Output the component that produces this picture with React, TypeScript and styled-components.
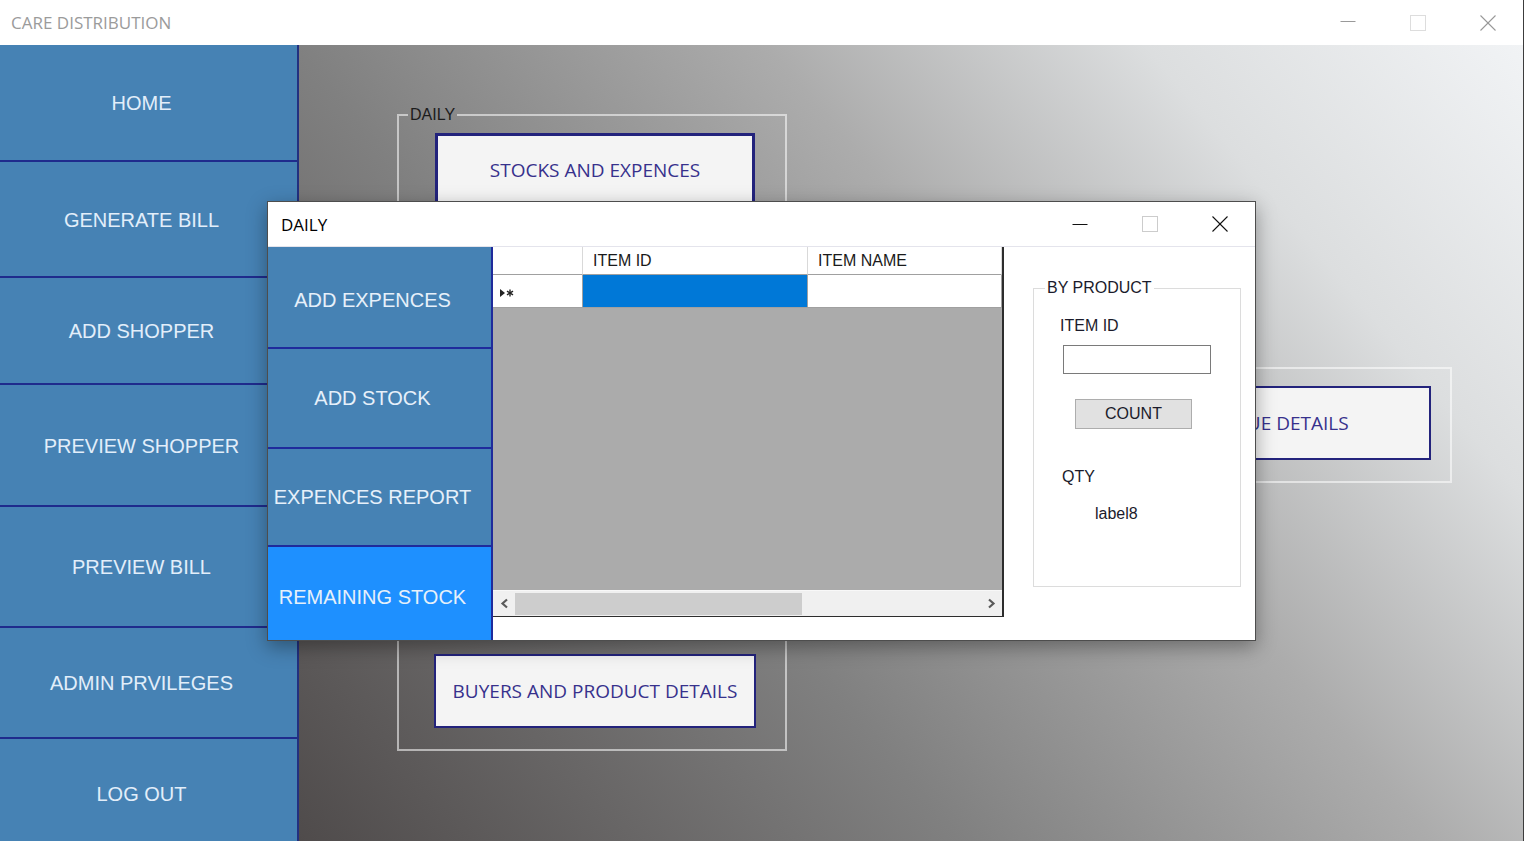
import React from 'react';
import styled, { createGlobalStyle } from 'styled-components';

const GlobalStyle = createGlobalStyle`
  html, body {
    margin: 0;
    padding: 0;
    background: #ffffff;
  }
  body {
    font-family: 'Liberation Sans', Arial, sans-serif;
  }
  * {
    box-sizing: border-box;
  }
`;

const Window = styled.div`
  position: relative;
  width: 1524px;
  height: 841px;
  border-right: 1px solid #3c3c3c;
  display: grid;
  grid-template-rows: 45px 1fr;
  overflow: hidden;
`;

const TitleBar = styled.div`
  display: flex;
  align-items: center;
  justify-content: space-between;
  background: #ffffff;
`;

const AppTitle = styled.div`
  padding-left: 11px;
  font-family: 'Open Sans', sans-serif;
  font-size: 17px;
  color: #9b9b9b;
`;

const Controls = styled.div`
  display: flex;
  align-self: stretch;
`;

const ControlButton = styled.div`
  width: 70px;
  display: flex;
  align-items: center;
  justify-content: center;
`;

const Body = styled.div`
  display: grid;
  grid-template-columns: 299px 1fr;
  min-height: 0;
`;

const Sidebar = styled.div`
  background: #4682b4;
  border-right: 2px solid #23307f;
  display: flex;
  flex-direction: column;
  overflow: hidden;
`;

const NavButton = styled.div<{ $height?: number }>`
  flex: ${p => (p.$height ? `0 0 ${p.$height}px` : '1')};
  border-bottom: ${p => (p.$height ? '2px solid #1f2b8c' : 'none')};
  display: flex;
  align-items: center;
  justify-content: center;
  padding: ${p => (p.$height ? '2px' : '8px')} 14px 0 0;
  color: #e2eefa;
  font-size: 20px;
`;

const Canvas = styled.div`
  background: linear-gradient(
    50deg,
    #4f4b4b 0%,
    #808080 35%,
    #acacac 60%,
    #dcdedf 80%,
    #f1f3f5 100%
  );
  display: grid;
  grid-template-columns: 390px 384px;
  grid-template-rows: 145px 108px 124px 144px 124px;
  column-gap: 281px;
  padding: 61px 0 0 98px;
  align-content: start;
`;

const GroupBox = styled.fieldset<{ $col: number; $row: number }>`
  grid-column: ${p => p.$col};
  grid-row: ${p => p.$row};
  margin: 0;
  padding: 0;
  min-width: 0;
  border: 2px solid rgba(255, 255, 255, 0.55);
`;

const GroupLegend = styled.legend`
  margin-left: 9px;
  padding: 0 2px;
  font-size: 16px;
  line-height: 18px;
  color: #1c1c1c;
`;

const BigButton = styled.div<{ $left: number; $width: number; $height: number; $focused?: boolean }>`
  margin: 9px 0 0 ${p => p.$left}px;
  width: ${p => p.$width}px;
  height: ${p => p.$height}px;
  background: #f4f4f4;
  border: ${p => (p.$focused ? 3 : 2)}px solid #23237c;
  display: flex;
  align-items: center;
  justify-content: center;
  font-family: 'Open Sans', sans-serif;
  font-size: 19px;
  color: #37318c;
`;

const Dialog = styled.div`
  position: absolute;
  left: 267px;
  top: 201px;
  width: 989px;
  height: 440px;
  border: 1px solid #4d4d4d;
  background: #ffffff;
  box-shadow: 0 6px 18px rgba(0, 0, 0, 0.35);
  display: grid;
  grid-template-rows: 45px 1fr;
`;

const DialogTitleBar = styled.div`
  display: flex;
  align-items: center;
  justify-content: space-between;
  padding-left: 13px;
  border-bottom: 1px solid #e4e4ec;
`;

const DialogTitle = styled.div`
  font-family: 'Open Sans', sans-serif;
  font-size: 17px;
  color: #000000;
`;

const DialogBody = styled.div`
  display: grid;
  grid-template-columns: 225px 511px 1fr;
  min-height: 0;
  overflow: hidden;
`;

const Menu = styled.div`
  background: #4682b4;
  border-right: 2px solid #1f2b9c;
  display: flex;
  flex-direction: column;
  overflow: hidden;
`;

const MenuItem = styled.div<{ $height: number; $active?: boolean; $shift?: number }>`
  flex: 0 0 ${p => p.$height}px;
  background: ${p => (p.$active ? '#1e90ff' : '#4682b4')};
  border-bottom: 2px solid #1f2b9c;
  display: flex;
  align-items: center;
  justify-content: center;
  padding: ${p => p.$shift || 0}px 14px 0 0;
  color: #e6f0fa;
  font-size: 20px;
  white-space: nowrap;
`;

const GridArea = styled.div`
  display: flex;
  flex-direction: column;
  background: #ffffff;
`;

const GridFrame = styled.div`
  height: 370px;
  border-right: 2px solid #2d2d2d;
  border-bottom: 1px solid #2d2d2d;
  background: #ababab;
  display: flex;
  flex-direction: column;
`;

const GridRow = styled.div<{ $height: number }>`
  display: grid;
  grid-template-columns: 90px 225px 1fr;
  height: ${p => p.$height}px;
  background: #ffffff;
`;

const HeaderCell = styled.div`
  border-right: 1px solid #d9d9d9;
  border-bottom: 1px solid #a0a0a0;
  display: flex;
  align-items: center;
  padding-left: 10px;
  font-size: 16px;
  color: #1a1a1a;
`;

const Cell = styled.div<{ $selected?: boolean }>`
  background: ${p => (p.$selected ? '#0078d7' : '#ffffff')};
  border-right: 1px solid #a0a0a0;
  border-bottom: 1px solid #a0a0a0;
  display: flex;
  align-items: center;
  padding: 3px 0 0 7px;
`;

const GridFill = styled.div`
  flex: 1;
`;

const ScrollBar = styled.div`
  height: 26px;
  background: #f0f0f0;
  border-top: 1px solid #f8f8f8;
  display: flex;
  align-items: center;
`;

const ScrollArrow = styled.div`
  width: 22px;
  display: flex;
  align-items: center;
  justify-content: center;
`;

const ScrollThumb = styled.div`
  width: 287px;
  height: 22px;
  background: #cdcdcd;
`;

const ScrollTrack = styled.div`
  flex: 1;
`;

const SidePanel = styled.div`
  padding: 32px 0 0 29px;
  background: #ffffff;
`;

const ProductGroup = styled.fieldset`
  margin: 0;
  padding: 0;
  width: 208px;
  height: 308px;
  border: 1px solid #dcdcdc;
  display: flex;
  flex-direction: column;
  align-items: flex-start;
`;

const ProductLegend = styled.legend`
  margin-left: 11px;
  padding: 0 2px;
  font-size: 16px;
  line-height: 18px;
  color: #1b1b2b;
`;

const FieldLabel = styled.div<{ $left: number; $top: number }>`
  margin: ${p => p.$top}px 0 0 ${p => p.$left}px;
  font-size: 16px;
  line-height: 18px;
  color: #1b1b2b;
`;

const TextBox = styled.div`
  margin: 10px 0 0 29px;
  width: 148px;
  height: 29px;
  border: 1px solid #7a7a7a;
  background: #ffffff;
`;

const CountButton = styled.div`
  margin: 25px 0 0 41px;
  width: 117px;
  height: 30px;
  background: #e1e1e1;
  border: 1px solid #adadad;
  display: flex;
  align-items: center;
  justify-content: center;
  font-size: 16px;
  color: #1b1b2b;
`;

const MinimizeIcon = ({ color, y = 8.5 }: { color: string; y?: number }) => (
  <svg width="16" height="16" viewBox="0 0 16 16">
    <line x1="0.5" y1={y} x2="15.5" y2={y} stroke={color} strokeWidth="1" />
  </svg>
);

const MaximizeIcon = ({ color }: { color: string }) => (
  <svg width="16" height="16" viewBox="0 0 16 16">
    <rect x="0.5" y="0.5" width="15" height="15" fill="none" stroke={color} strokeWidth="1" />
  </svg>
);

const CloseIcon = ({ color }: { color: string }) => (
  <svg width="16" height="16" viewBox="0 0 16 16">
    <line x1="0.5" y1="0.5" x2="15.5" y2="15.5" stroke={color} strokeWidth="1.1" />
    <line x1="15.5" y1="0.5" x2="0.5" y2="15.5" stroke={color} strokeWidth="1.1" />
  </svg>
);

const RowMarker = () => (
  <svg width="16" height="10" viewBox="0 0 16 10">
    <polygon points="0,1 5,5 0,9" fill="#222" />
    <g stroke="#222" strokeWidth="1.4">
      <line x1="10" y1="1.5" x2="10" y2="8.5" />
      <line x1="7" y1="3.2" x2="13" y2="6.8" />
      <line x1="13" y1="3.2" x2="7" y2="6.8" />
    </g>
  </svg>
);

const Chevron = ({ dir }: { dir: 'left' | 'right' }) => (
  <svg width="9" height="11" viewBox="0 0 9 11">
    <polyline
      points={dir === 'left' ? '7,1.5 2.5,5.5 7,9.5' : '2,1.5 6.5,5.5 2,9.5'}
      fill="none"
      stroke="#5a5a5a"
      strokeWidth="2.2"
    />
  </svg>
);

const navItems = [
  { label: 'HOME', height: 117 },
  { label: 'GENERATE BILL', height: 116 },
  { label: 'ADD SHOPPER', height: 107 },
  { label: 'PREVIEW SHOPPER', height: 122 },
  { label: 'PREVIEW BILL', height: 121 },
  { label: 'ADMIN PRVILEGES', height: 111 },
  { label: 'LOG OUT' },
];

const menuItems = [
  { label: 'ADD EXPENCES', height: 102, shift: 7 },
  { label: 'ADD STOCK', height: 100 },
  { label: 'EXPENCES REPORT', height: 98 },
  { label: 'REMAINING STOCK', height: 100, active: true, shift: 2 },
];

export default function App() {
  return (
    <>
      <GlobalStyle />
      <Window>
        <TitleBar>
          <AppTitle>CARE DISTRIBUTION</AppTitle>
          <Controls>
            <ControlButton><MinimizeIcon color="#999999" y={6.5} /></ControlButton>
            <ControlButton><MaximizeIcon color="#dddddd" /></ControlButton>
            <ControlButton><CloseIcon color="#999999" /></ControlButton>
          </Controls>
        </TitleBar>
        <Body>
          <Sidebar>
            {navItems.map(item => (
              <NavButton key={item.label} $height={item.height}>{item.label}</NavButton>
            ))}
          </Sidebar>
          <Canvas>
            <GroupBox $col={1} $row={1}>
              <GroupLegend>DAILY</GroupLegend>
              <BigButton $left={36} $width={320} $height={73} $focused>STOCKS AND EXPENCES</BigButton>
            </GroupBox>
            <GroupBox $col={2} $row={3}>
              <GroupLegend>DETAILS</GroupLegend>
              <BigButton $left={36} $width={325} $height={74}>REVENUE DETAILS</BigButton>
            </GroupBox>
            <GroupBox $col={1} $row={5}>
              <GroupLegend>BUYERS AND PRODUCTS</GroupLegend>
              <BigButton $left={35} $width={322} $height={74}>BUYERS AND PRODUCT DETAILS</BigButton>
            </GroupBox>
          </Canvas>
        </Body>

        <Dialog>
          <DialogTitleBar>
            <DialogTitle>DAILY</DialogTitle>
            <Controls>
              <ControlButton><MinimizeIcon color="#111111" /></ControlButton>
              <ControlButton><MaximizeIcon color="#cccccc" /></ControlButton>
              <ControlButton><CloseIcon color="#111111" /></ControlButton>
            </Controls>
          </DialogTitleBar>
          <DialogBody>
            <Menu>
              {menuItems.map(item => (
                <MenuItem key={item.label} $height={item.height} $active={item.active} $shift={item.shift}>
                  {item.label}
                </MenuItem>
              ))}
            </Menu>
            <GridArea>
              <GridFrame>
                <GridRow $height={28}>
                  <HeaderCell />
                  <HeaderCell>ITEM ID</HeaderCell>
                  <HeaderCell>ITEM NAME</HeaderCell>
                </GridRow>
                <GridRow $height={33}>
                  <Cell><RowMarker /></Cell>
                  <Cell $selected />
                  <Cell />
                </GridRow>
                <GridFill />
                <ScrollBar>
                  <ScrollArrow><Chevron dir="left" /></ScrollArrow>
                  <ScrollThumb />
                  <ScrollTrack />
                  <ScrollArrow><Chevron dir="right" /></ScrollArrow>
                </ScrollBar>
              </GridFrame>
            </GridArea>
            <SidePanel>
              <ProductGroup>
                <ProductLegend>BY PRODUCT</ProductLegend>
                <FieldLabel $left={26} $top={20}>ITEM ID</FieldLabel>
                <TextBox />
                <CountButton>COUNT</CountButton>
                <FieldLabel $left={28} $top={39}>QTY</FieldLabel>
                <FieldLabel $left={61} $top={19}>label8</FieldLabel>
              </ProductGroup>
            </SidePanel>
          </DialogBody>
        </Dialog>
      </Window>
    </>
  );
}
